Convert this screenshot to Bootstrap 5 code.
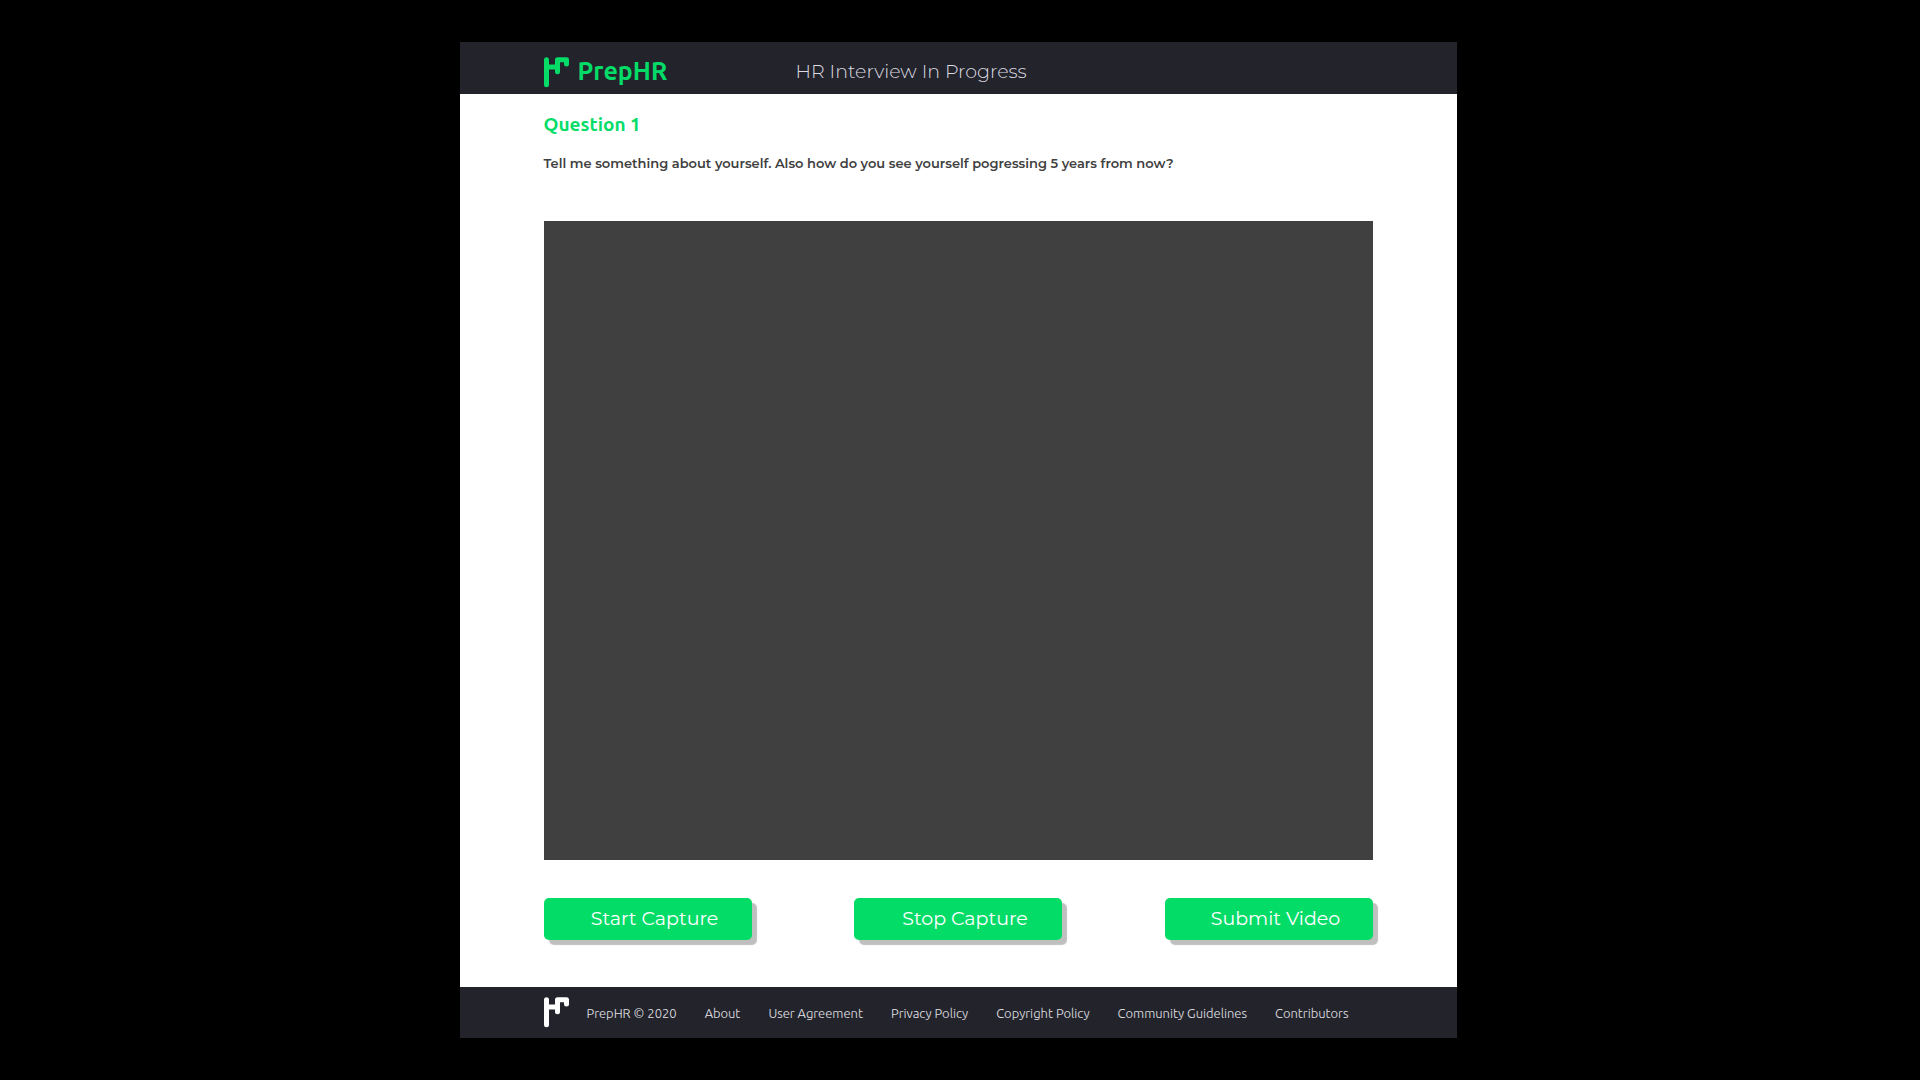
<!DOCTYPE html>
<html lang="en">
<head>
<meta charset="utf-8">
<meta name="viewport" content="width=device-width, initial-scale=1">
<title>PrepHR – HR Interview</title>
<link href="https://cdn.jsdelivr.net/npm/bootstrap@5.3.0/dist/css/bootstrap.min.css" rel="stylesheet">
<style>
  :root { --brand: #04dc68; --ink: #23232c; }
  body { background: #000; font-family: Montserrat, Inter, "Noto Sans", sans-serif; padding-right: 4px; }
  .sheet { max-width: 997px; min-height: calc(100vh - 84px); margin: 42px auto; background: #fff; }
  .gutter { padding-left: 84px; padding-right: 84px; }
  .bar { background: var(--ink); min-height: 52px; }
  .foot-bar { background: var(--ink); min-height: 51px; }
  .ubuntu-like { font-family: Ubuntu, "Noto Sans", "Open Sans", sans-serif; }
  .brand-link { width: 252px; color: var(--brand); font-size: 25px; line-height: 32px; }
  .brand-name { margin-top: 6px; }
  .mark-icon { width: 26px; height: 31px; flex: none; }
  .page-title { font-size: 19px; line-height: 28px; font-weight: 300; color: #dcdce0; }
  .question-no { font-size: 19px; line-height: 24px; color: var(--brand); margin: 18px 0 17px; }
  .question-text { font-size: 13px; line-height: 20px; font-weight: 600; color: #404040; }
  .video-box { background: #404040; min-height: 639px; margin-top: 48px; }
  .actions { margin-top: 38px; margin-bottom: 46px; }
  .btn-capture { --bs-btn-color: #fff; --bs-btn-bg: var(--brand); --bs-btn-hover-color: #fff; --bs-btn-hover-bg: #03c45c; --bs-btn-border-width: 0; --bs-btn-border-radius: 5px;
    width: 208px; height: 42px; padding: 0 0 0 14px; font-size: 19px; box-shadow: 5px 5px 1px #bfbfbf; }
  .foot-nav { gap: 28px; font-size: 13px; line-height: 16px; font-weight: 300; padding-top: 1px; color: #e4e4e8; }
  .foot-nav a { color: inherit; text-decoration: none; }
  .foot-logo { margin-right: 17px; }
</style>
<script src="https://cdn.jsdelivr.net/npm/bootstrap@5.3.0/dist/js/bootstrap.bundle.min.js" defer></script>
</head>
<body>
<svg class="d-none" aria-hidden="true">
  <symbol id="hr-mark" viewBox="0 0 26 31">
    <path d="M2.5 2.7V27.8M2.5 10H13.5M13.5 14.7V2.7H22.5V7" fill="none" stroke="currentColor" stroke-width="5" stroke-linecap="round" stroke-linejoin="round"/>
  </symbol>
</svg>
<div class="sheet d-flex flex-column">
  <header class="bar gutter d-flex align-items-center">
    <a href="#" class="brand-link ubuntu-like d-flex align-items-center gap-2 fw-bold text-decoration-none">
      <svg class="mark-icon mt-2"><use href="#hr-mark"/></svg><span class="brand-name">PrepHR</span>
    </a>
    <h1 class="page-title mb-0 mt-2">HR Interview In Progress</h1>
  </header>
  <main class="gutter flex-grow-1">
    <h2 class="question-no ubuntu-like fw-bold">Question 1</h2>
    <p class="question-text mb-0">Tell me something about yourself. Also how do you see yourself pogressing 5 years from now?</p>
    <div class="video-box" role="img" aria-label="Video preview"></div>
    <div class="actions d-flex flex-wrap justify-content-between">
      <button type="button" class="btn btn-capture">Start Capture</button>
      <button type="button" class="btn btn-capture">Stop Capture</button>
      <button type="button" class="btn btn-capture">Submit Video</button>
    </div>
  </main>
  <footer class="foot-bar gutter d-flex align-items-center text-white">
    <svg class="mark-icon foot-logo"><use href="#hr-mark"/></svg>
    <nav class="foot-nav ubuntu-like d-flex flex-wrap" aria-label="Footer">
      <span>PrepHR © 2020</span>
      <a href="#">About</a>
      <a href="#">User Agreement</a>
      <a href="#">Privacy Policy</a>
      <a href="#">Copyright Policy</a>
      <a href="#">Community Guidelines</a>
      <a href="#">Contributors</a>
    </nav>
  </footer>
</div>
</body>
</html>
